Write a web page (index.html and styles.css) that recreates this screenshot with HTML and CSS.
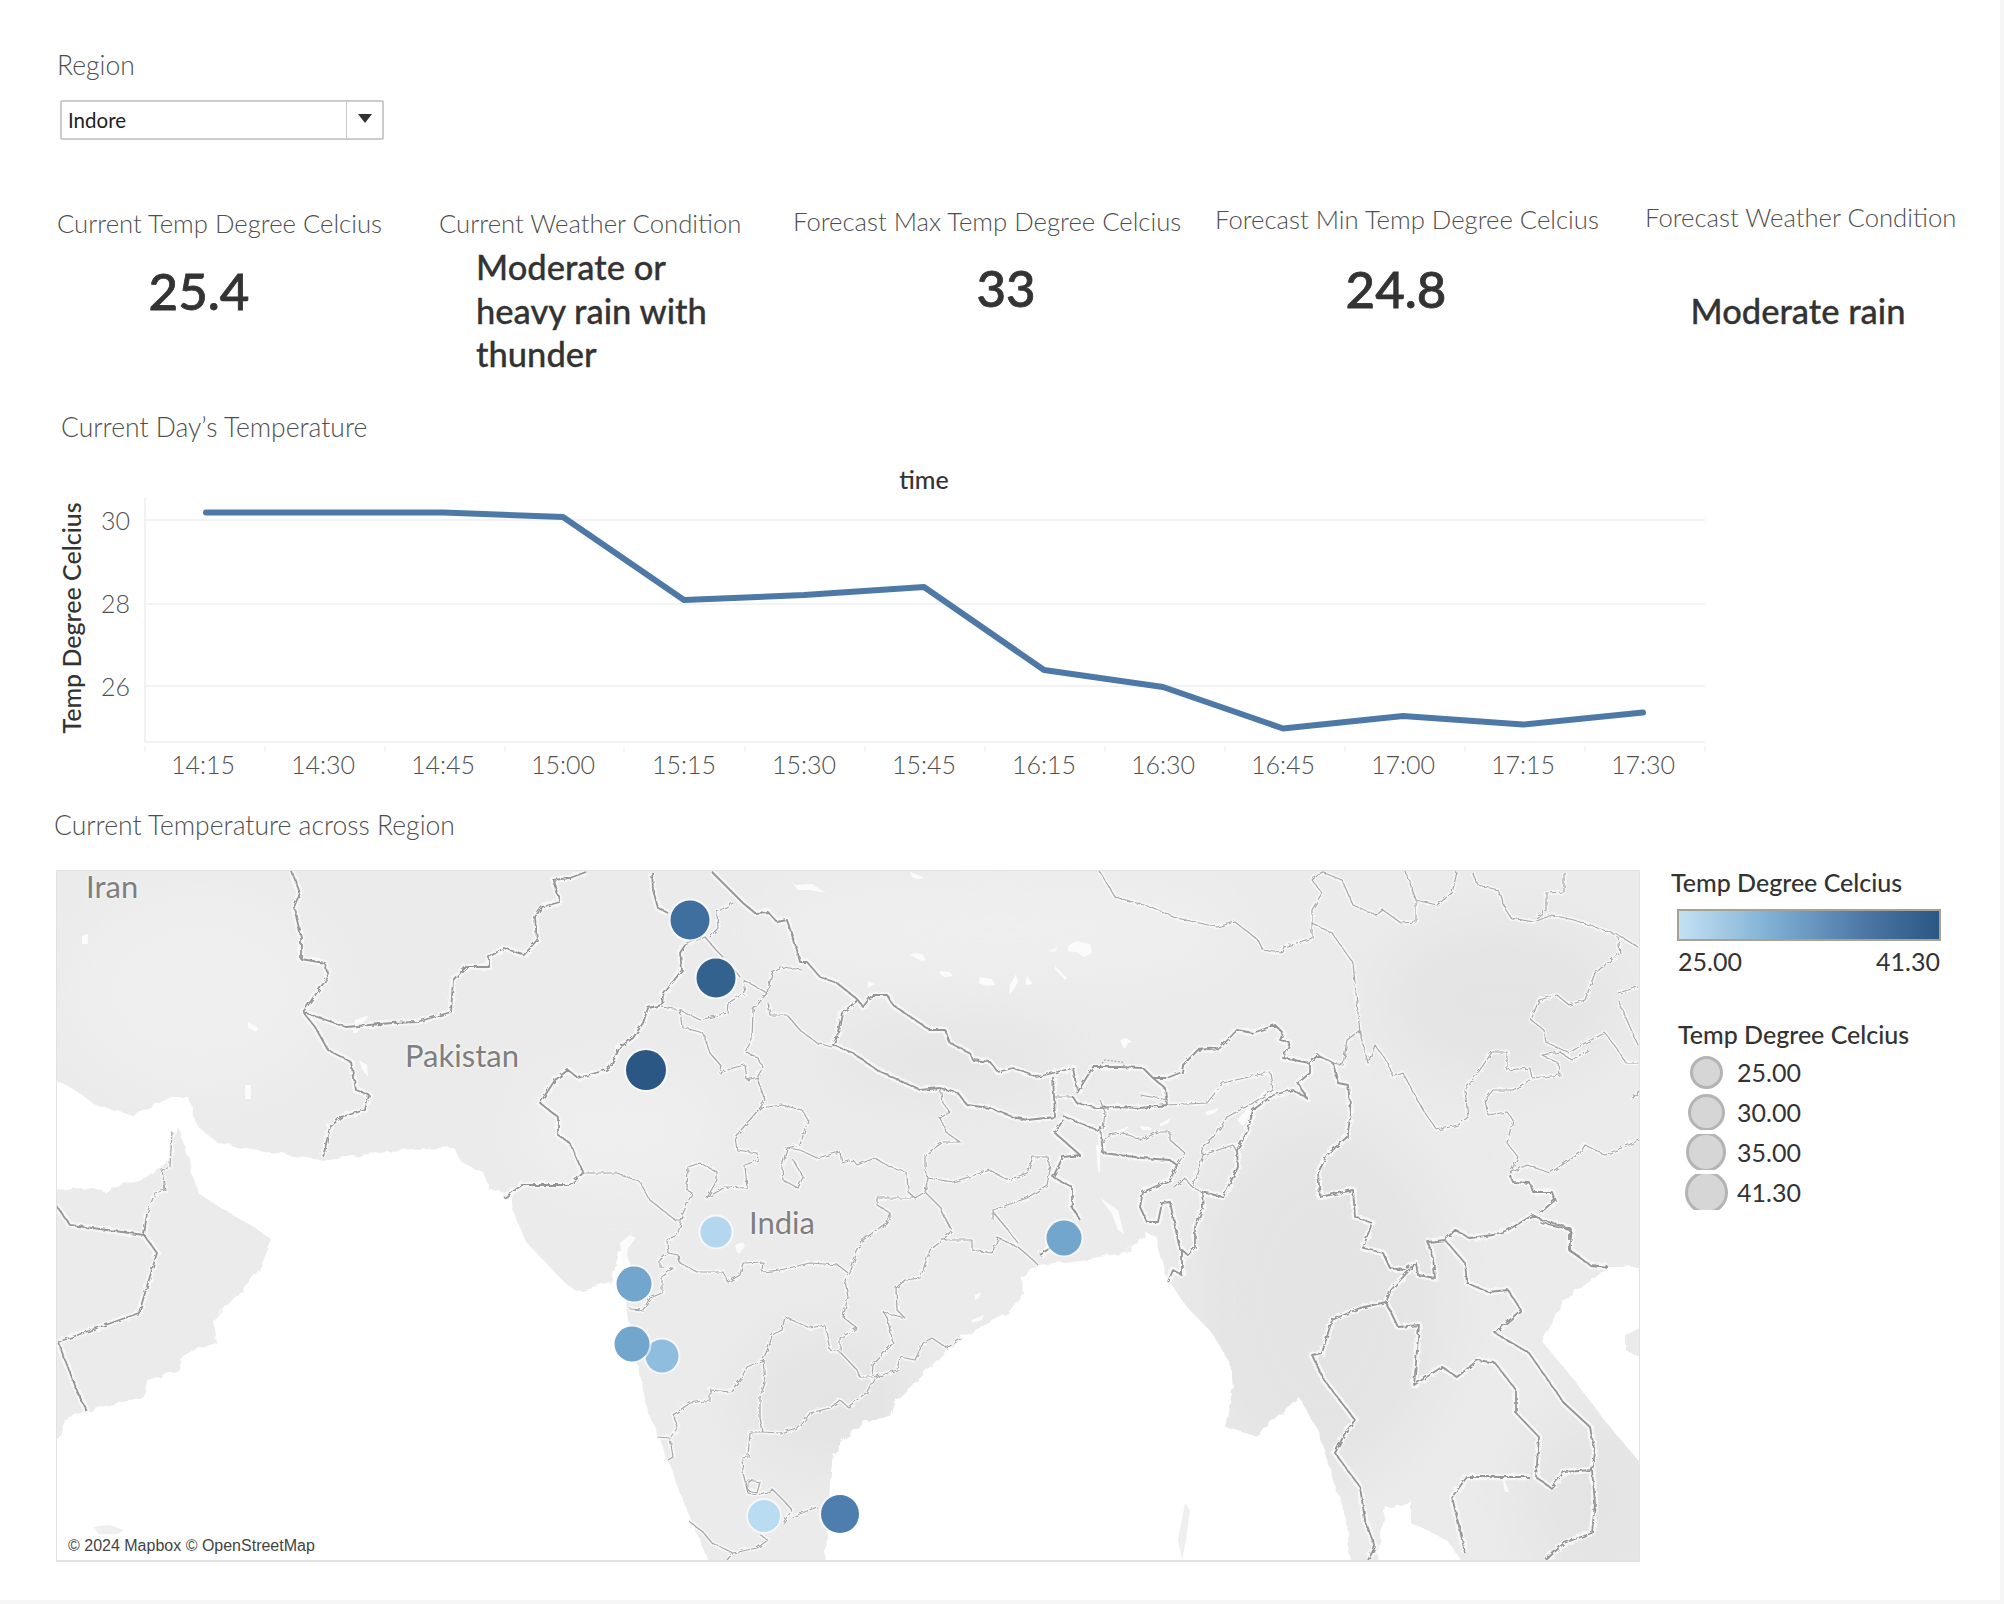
FILE: index.html
```html
<!DOCTYPE html>
<html lang="en">
<head>
    <meta charset="UTF-8">
    <title>Weather Dashboard</title>
    <link rel="stylesheet" href="styles.css">
</head>
<body>
    <div class="dashboard">
        <div class="filter">
            <div class="title">Region</div>
            <div class="select">
                <span class="select-value">Indore</span>
                <span class="select-button"><span class="select-arrow"></span></span>
            </div>
        </div>

        <div class="kpis">
            <div class="kpi kpi-temp">
                <div class="title">Current Temp Degree Celcius</div>
                <div class="kpi-number">25.4</div>
            </div>
            <div class="kpi kpi-cond">
                <div class="title">Current Weather Condition</div>
                <div class="kpi-text">Moderate or heavy rain with thunder</div>
            </div>
            <div class="kpi kpi-max">
                <div class="title">Forecast Max Temp Degree Celcius</div>
                <div class="kpi-number">33</div>
            </div>
            <div class="kpi kpi-min">
                <div class="title">Forecast Min Temp Degree Celcius</div>
                <div class="kpi-number">24.8</div>
            </div>
            <div class="kpi kpi-forecast">
                <div class="title">Forecast Weather Condition</div>
                <div class="kpi-text">Moderate rain</div>
            </div>
        </div>

        <div class="title chart-title">Current Day’s Temperature</div>
        <svg class="chart" viewBox="50 442 1680 369">
            <path class="axis" d="M145 498V742H1705"/>
            <path class="grid" d="M145 520H1705M145 604H1705M145 686H1705"/>
            <path class="tick" d="M145 746V752M265 746V752M385 746V752M505 746V752M624 746V752M745 746V752M865 746V752M985 746V752M1105 746V752M1225 746V752M1345 746V752M1465 746V752M1585 746V752M1705 746V752"/>
            <polyline class="temp-line" points="206,512.5 323,512.5 443,512.5 563,517 684,600 804,595 924,587 1044,670 1163,687 1283,728.5 1403,716 1523,724.5 1643,712.5"/>
            <text class="axis-name" x="924" y="489" text-anchor="middle">time</text>
            <text class="axis-name" transform="translate(81 618) rotate(-90)" text-anchor="middle">Temp Degree Celcius</text>
            <text class="axis-label" x="130" y="530" text-anchor="end">30</text>
            <text class="axis-label" x="130" y="613" text-anchor="end">28</text>
            <text class="axis-label" x="130" y="696" text-anchor="end">26</text>
            <g class="axis-label" text-anchor="middle">
                <text x="203" y="774">14:15</text>
                <text x="323" y="774">14:30</text>
                <text x="443" y="774">14:45</text>
                <text x="563" y="774">15:00</text>
                <text x="684" y="774">15:15</text>
                <text x="804" y="774">15:30</text>
                <text x="924" y="774">15:45</text>
                <text x="1044" y="774">16:15</text>
                <text x="1163" y="774">16:30</text>
                <text x="1283" y="774">16:45</text>
                <text x="1403" y="774">17:00</text>
                <text x="1523" y="774">17:15</text>
                <text x="1643" y="774">17:30</text>
            </g>
        </svg>

        <div class="title map-title">Current Temperature across Region</div>
        <div class="map-row">
            <div class="map">
                <svg class="map-svg" viewBox="56 870 1584 692">
                    <defs>
                        <filter id="soft" x="-20%" y="-20%" width="140%" height="140%"><feGaussianBlur stdDeviation="30"/></filter>
                        <filter id="edge" x="-2%" y="-2%" width="104%" height="104%">
                            <feTurbulence type="fractalNoise" baseFrequency="0.09" numOctaves="2" seed="4"/>
                            <feDisplacementMap in="SourceGraphic" scale="7"/>
                            <feGaussianBlur stdDeviation="0.7"/>
                        </filter>
                        <filter id="wiggle" x="-2%" y="-2%" width="104%" height="104%">
                            <feTurbulence type="fractalNoise" baseFrequency="0.2" numOctaves="2" seed="7"/>
                            <feDisplacementMap in="SourceGraphic" scale="4"/>
                            <feGaussianBlur stdDeviation="0.4"/>
                        </filter>
                        <path id="states" d="M680 1010L682 1027 703 1033 710 1053 722 1067 720 1073 733 1068 745 1065 747 1080 758 1077
                            M662 1007L680 1010 700 1020 727 1013 728 1003 745 993 743 980 753 985 767 993
                            M740 977L730 965M710 937L718 928 717 912 733 903
                            M685 945L705 937 716 950 724 958
                            M767 993L772 973 783 967 802 970
                            M768 1003L770 1015 787 1015 800 1030 817 1043 832 1047
                            M767 993L753 1010 752 1040 745 1052 757 1057 763 1067 757 1078 765 1100 760 1108 782 1105
                            M782 1105L802 1110 808 1120 800 1145 787 1148 800 1150 817 1158 840 1152 842 1163 853 1160 857 1165 875 1158 887 1165 907 1173 908 1192 915 1198
                            M787 1148L782 1167 783 1180 798 1188 803 1177 793 1160
                            M760 1108L735 1137 737 1150 757 1153 758 1160 745 1165 747 1188 725 1187 707 1198 717 1180 717 1172 700 1163 688 1167 687 1190 692 1193 680 1220 683 1217 677 1235 667 1240 668 1253 660 1260 660 1267 673 1268 662 1277 662 1293 650 1298 643 1310 630 1309
                            M583 1173L600 1173 617 1173 640 1182 650 1200 675 1220 680 1220
                            M668 1253L678 1255 680 1263 697 1272 723 1272 728 1282 740 1275 743 1263 763 1262 762 1272 780 1270 810 1263 838 1265 848 1273
                            M890 1212L890 1220 863 1240 857 1252 850 1273 845 1280 848 1297 843 1317 857 1328 840 1338 840 1350
                            M785 1317L810 1328 825 1325 830 1350 840 1352 857 1370 860 1377 873 1377 880 1375
                            M785 1317L782 1330 772 1335 770 1343 763 1360 765 1383 760 1397 760 1418 763 1432
                            M763 1360L747 1367 740 1380 730 1392 710 1390 710 1400 690 1403 673 1415 678 1427 670 1438 657 1437
                            M670 1438L673 1457 668 1460
                            M763 1432L780 1433 800 1427 810 1413 830 1408 840 1400 848 1407 867 1392 873 1380 882 1375 897 1370 900 1357 915 1360 923 1343 932 1338 947 1348 962 1338
                            M872 1375L873 1365 893 1343 887 1317 883 1312 905 1318 897 1310 896 1288 905 1280 920 1278 930 1250 943 1240 952 1230 942 1212 950 1228
                            M943 1240L972 1240 972 1250 992 1253 998 1238 1018 1247 1033 1260 1038 1265
                            M993 1212L1008 1230 1018 1243
                            M763 1432L750 1432 748 1457 742 1458 743 1473 748 1493 757 1495 773 1490 785 1502 792 1510 783 1523
                            M792 1517L817 1507
                            M690 1522L703 1532 712 1543 733 1553 757 1548 768 1540 760 1535
                            M733 1553L727 1560
                            M748 1480L760 1482 757 1493 748 1490Z
                            M940 1088L943 1103 950 1112 940 1118 947 1133 960 1142 943 1142 925 1155 925 1170 928 1178 953 1182 990 1170 1008 1180 1027 1173 1033 1157 1048 1157 1050 1170 1047 1185 1027 1198 1013 1203 993 1210 993 1220
                            M928 1178L925 1192 915 1198 877 1198 877 1205 890 1213 883 1228
                            M925 1192L940 1207 950 1228
                            M1053 1097L1073 1097
                            M1167 1105L1207 1103 1223 1083 1270 1072 1273 1090 1253 1103 1227 1117 1217 1133 1202 1147 1203 1155 1192 1187 1185 1178 1175 1188
                            M1203 1155L1233 1145 1237 1152
                            M1103 1143L1108 1135 1123 1133 1142 1140 1157 1132 1170 1132 1170 1140 1185 1153 1177 1165
                            M1100 1100L1105 1112 1103 1130
                            M1192 1187L1202 1192
                            M1312 923L1332 933 1353 963 1355 983 1360 1033 1368 1063 1375 1045 1388 1063 1393 1077 1403 1073 1423 1110 1437 1130 1458 1125 1468 1117 1465 1090 1482 1067 1492 1052 1507 1052 1507 1070 1530 1068 1532 1078 1560 1075 1558 1063 1542 1055 1560 1052 1572 1060 1588 1050
                            M1360 1030L1347 1040 1343 1065 1333 1063
                            M1100 872L1115 897 1151 907 1177 918 1217 927 1235 922 1258 940 1263 950 1281 953 1284 947 1312 938 1312 925 1312 910 1322 893 1312 880 1322 872
                            M1530 1080L1513 1090 1493 1090 1485 1100 1488 1115 1507 1112 1513 1120 1507 1143 1518 1157 1510 1173 1527 1165 1550 1173 1580 1153 1585 1145 1605 1155 1640 1140
                            M1406 872L1416 900 1437 905 1452 893 1457 872
                            M1416 900L1416 922 1401 923 1383 910 1376 915 1353 905 1342 880 1322 872
                            M1472 872L1478 885 1498 890 1506 910 1511 918 1534 922 1552 915 1574 920 1618 935 1638 947
                            M1564 872L1564 892 1546 893 1546 910 1536 918
                            M1618 937L1620 953 1595 973 1585 1000 1569 1005 1557 995 1539 1000 1531 1020 1544 1030 1546 1042 1569 1053 1585 1043 1605 1033 1618 1050 1626 1063 1638 1063
                            M1618 993L1638 987M1618 1000L1630 1027 1638 1045M1631 1100L1640 1090
                            M147 1213L155 1193 165 1190 162 1170 170 1167 172 1132
                            M1168 1100L1140 1095"/>
                        <path id="countries" d="M652 872L653 890 658 908 668 913M685 945L680 953 682 970 672 983 663 995 662 1005 648 1008 643 1023 633 1038 620 1047 610 1067 606 1070 578 1078 568 1070 555 1080 540 1103 558 1117 558 1135 570 1143 583 1173 570 1185 522 1185 504 1198
                            M292 872L300 893 294 907 301 937 301 959 325 963 328 977 303 1012 346 1027 392 1023 417 1022 451 1012 453 980 466 967 489 967 489 957 504 948 524 955 537 940 535 917 542 907 560 902 553 880 570 878 586 872
                            M303 1012L315 1027 328 1050 351 1062 356 1090 369 1095 365 1110 341 1117 330 1127 323 1157
                            M712 872L727 887 743 903 755 913 768 912 777 922 787 920 797 950 800 962 807 962 820 977 837 983 858 1000 863 1007 872 995 887 995 893 1005 930 1030 945 1030 950 1043 970 1053 973 1060 990 1062 998 1072 1013 1068 1037 1077 1057 1072 1073 1068 1077 1090
                            M858 1000L842 1013 837 1037 833 1045 853 1053 877 1070 903 1082 920 1090 940 1088 958 1093 967 1105 990 1108 1013 1117 1027 1120 1055 1117 1053 1077
                            M1077 1093L1093 1067 1120 1067 1143 1068 1153 1078 1165 1088 1167 1105 1140 1108 1118 1107 1097 1108 1077 1103 1073 1097
                            M1153 1078L1167 1078 1182 1072 1183 1065 1198 1050 1220 1048 1237 1030 1253 1033 1275 1025 1283 1033 1280 1040 1290 1043 1283 1058 1310 1063 1318 1055 1333 1063 1338 1083 1348 1085 1351 1113 1347 1137 1327 1155 1318 1173 1320 1197 1353 1190 1355 1217 1372 1223 1363 1248 1383 1253 1390 1268 1403 1270 1416 1263 1418 1275 1435 1278 1433 1257 1428 1242 1445 1240 1455 1230 1470 1238 1493 1235 1508 1230 1533 1215 1542 1220 1570 1228 1570 1250 1580 1257
                            M1310 1063L1310 1073 1298 1083 1307 1098 1293 1090 1273 1095 1253 1110 1248 1130 1237 1150 1238 1167 1223 1197 1202 1192 1203 1208 1195 1227 1195 1247 1188 1255 1182 1250 1182 1275 1173 1270 1168 1282
                            M1062 1115L1080 1123 1097 1130 1100 1127 1103 1153 1143 1158 1170 1160 1177 1165 1170 1180 1143 1192 1140 1207 1147 1222 1158 1222 1162 1203 1170 1202 1180 1250
                            M1063 1120L1055 1133 1080 1155 1063 1157 1053 1177 1072 1187 1072 1207 1080 1220
                            M1040 1255L1050 1248
                            M1416 1263L1391 1290 1386 1302 1360 1308 1332 1320 1322 1353 1312 1355 1324 1380 1345 1407 1355 1420 1345 1433 1335 1453 1360 1487 1365 1520 1375 1547 1368 1560
                            M1386 1302L1398 1327 1419 1325 1416 1363 1414 1385 1442 1367 1457 1377 1478 1360 1495 1363 1516 1390 1516 1413 1539 1437 1536 1477 1551 1488 1564 1472 1592 1470
                            M1529 1477L1467 1477 1452 1497 1460 1530 1465 1553
                            M1445 1240L1465 1263 1467 1283 1488 1292 1508 1290 1521 1310 1495 1333 1529 1353 1564 1403 1590 1427 1595 1453 1592 1470 1595 1503 1592 1533 1564 1543 1546 1560
                            M1539 1222L1572 1230 1569 1250 1590 1265 1608 1267
                            M1510 1175L1513 1182 1530 1183 1533 1192 1552 1192 1555 1200 1540 1213
                            M56 1205L70 1225 144 1235 157 1253 139 1313 58 1342 78 1393 87 1412
                            M144 1235L147 1213"/>
                    </defs>

                    <rect class="land" x="56" y="870" width="1584" height="692"/>
                    <g class="relief" filter="url(#soft)">
                        <ellipse class="shade" cx="1320" cy="1300" rx="130" ry="180"/>
                        <ellipse class="shade" cx="950" cy="1060" rx="120" ry="32"/>
                        <ellipse class="shade" cx="1500" cy="1000" rx="120" ry="80"/>
                        <ellipse class="shade" cx="1600" cy="1500" rx="80" ry="90"/>
                        <ellipse class="shade" cx="830" cy="1400" rx="90" ry="70"/>
                        <ellipse class="glow" cx="200" cy="990" rx="130" ry="100"/>
                        <ellipse class="glow" cx="620" cy="1130" rx="100" ry="60"/>
                        <ellipse class="glow" cx="1000" cy="930" rx="240" ry="50"/>
                    </g>
                    <g class="sea" filter="url(#edge)">
                        <path d="M50 1077L70 1087 96 1105 132 1115 172 1097 188 1097 198 1127 218 1143 269 1152 320 1160 377 1153 453 1147 463 1163 484 1173 489 1190 514 1193 512 1210 527 1243 565 1283 578 1292 611 1283 619 1253 626 1247 629 1263 620 1283 626 1303 629 1320 634 1353 647 1407 667 1460 688 1513 713 1570 50 1570 50 1440 58 1440 65 1420 101 1407 144 1397 147 1380 180 1370 185 1353 216 1343 213 1320 239 1293 259 1270 272 1240 254 1227 229 1213 198 1193 186 1150 178 1127 170 1160 142 1180 106 1190 76 1188 50 1193Z"/>
                        <path d="M825 1570L830 1483 833 1453 850 1433 860 1427 865 1420 891 1417 896 1400 932 1367 962 1337 1008 1313 1023 1293 1021 1277 1039 1265 1080 1260 1125 1253 1146 1233 1156 1237 1166 1277 1187 1307 1212 1333 1230 1363 1233 1387 1225 1427 1258 1437 1273 1420 1299 1397 1319 1433 1335 1487 1347 1520 1350 1570Z"/>
                        <path d="M1375 1570L1386 1507 1411 1502 1411 1523 1447 1540 1467 1570Z"/>
                        <path d="M1646 1267L1608 1267 1585 1283 1564 1300 1541 1340 1574 1380 1610 1427 1638 1460 1646 1460 1646 1360 1625 1350 1625 1335 1646 1325Z"/>
                    </g>
                    <g class="islands">
                        <path d="M93 1527L110 1525 124 1530 115 1536 100 1535Z"/>
                        <path d="M1185 1503L1190 1510 1186 1540 1182 1560 1178 1540Z"/>
                    </g>
                    <g class="lakes">
                        <path d="M788 877L798 890 810 890 826 893 812 884 795 885Z"/>
                        <path d="M910 872l8 3 6 3-7 1-5-2z"/>
                        <path d="M910 955l12 6 4-1-4-6-8-1z"/>
                        <path d="M1068 946l8-5 14 3 2 9-8 4-8-5-8-1z"/>
                        <path d="M1048 951l8-3 2-1-3 5z"/>
                        <path d="M940 971l10 1 3 4-9 1-4-3z"/>
                        <path d="M980 977l12 2 3 6-9 1-7-3z"/>
                        <path d="M1010 985l6-11 2 8-6 10-3 2z"/>
                        <path d="M1027 976l6 8-8 1z"/>
                        <path d="M1055 966l12 12-2 2-10-11z"/>
                        <path d="M868 981l7 3-7 4z"/>
                        <path d="M1237 1120l28-30 4 2-20 24-6 10z"/>
                        <path d="M1205 1112l14-4-4 5-8 2z"/>
                        <path d="M1115 1132l14-6-2 3-10 5z"/>
                        <path d="M1140 1126l10 1 2 3-10 0z"/>
                        <path d="M1160 1124l12-7-4 6-8 4z"/>
                        <path d="M1096 1145l4 0 0 28-2-2z"/>
                        <path d="M1100 1198l18 12 6 24-6-4-6-16z"/>
                        <path d="M620 1243l10-8 6 3-8 10-2 20-4-4z"/>
                        <path d="M735 1245l8-3 2 4-6 8-2-2z"/>
                        <path d="M975 1295l6-3-2 6-4 2z"/>
                        <path d="M972 1320l12-5-2 5-10 3z"/>
                        <path d="M1120 1040l6-2 6 4-4 1-3 6-2-2z"/>
                        <path d="M82 936l6-2 0 10-6 0z"/>
                        <path d="M248 1022l10 6-2 4-8-4z"/>
                        <path d="M355 1020l14-5-12 18-4 0z"/>
                        <path d="M245 1085l6 0 0 14-6 0z"/>
                        <path d="M359 1060l8 5 1 12-6-8z"/>
                        <path d="M1503 1476l6 16-4 0-2-10z"/>
                    </g>
                    <use class="halo" href="#states" filter="url(#wiggle)"/>
                    <use class="halo halo-wide" href="#countries" filter="url(#wiggle)"/>
                    <use class="border-state" href="#states" filter="url(#wiggle)"/>
                    <use class="border-country" href="#countries" filter="url(#wiggle)"/>
                    <path class="border-dotted" d="M1100 1066L1105 1060 1122 1062 1125 1067"/>
                    <g class="pins">
                        <circle cx="690" cy="920" r="19.5" fill="#3f6f9f"/>
                        <circle cx="716" cy="978" r="19.5" fill="#34628f"/>
                        <circle cx="646" cy="1070" r="20" fill="#2a5783"/>
                        <circle cx="716" cy="1232" r="15.5" fill="#b3d7ef"/>
                        <circle cx="1064" cy="1238" r="17.5" fill="#73a6cd"/>
                        <circle cx="634" cy="1284" r="17.5" fill="#73a6cd"/>
                        <circle cx="662" cy="1356" r="16.5" fill="#8fbddf"/>
                        <circle cx="632" cy="1344" r="17.5" fill="#73a6cd"/>
                        <circle cx="764" cy="1516" r="16" fill="#b9dcf2"/>
                        <circle cx="840" cy="1514" r="19" fill="#4d7eae"/>
                    </g>
                </svg>
                <div class="place place-iran">Iran</div>
                <div class="place place-pakistan">Pakistan</div>
                <div class="place place-india">India</div>
                <div class="credit">© 2024 Mapbox © OpenStreetMap</div>
            </div>

            <div class="legend">
                <div class="legend-title">Temp Degree Celcius</div>
                <div class="ramp"></div>
                <div class="ramp-labels"><span>25.00</span><span>41.30</span></div>
                <div class="legend-title legend-title-size">Temp Degree Celcius</div>
                <div class="size-row"><span class="size-cell"><i class="dot dot-1"></i></span><span>25.00</span></div>
                <div class="size-row"><span class="size-cell"><i class="dot dot-2"></i></span><span>30.00</span></div>
                <div class="size-row"><span class="size-cell"><i class="dot dot-3"></i></span><span>35.00</span></div>
                <div class="size-row"><span class="size-cell"><i class="dot dot-4"></i></span><span>41.30</span></div>
            </div>
        </div>
    </div>
</body>
</html>
```

FILE: styles.css
```css
body {
    margin: 0;
    background-color: #f6f6f6;
    font-family: Lato, "Open Sans", sans-serif;
}

.dashboard {
    width: 2000px;
    height: 1600px;
    background-color: #ffffff;
    overflow: hidden;
}

.title {
    font-size: 26.5px;
    line-height: 28px;
    font-weight: 300;
    color: #4f4f4f;
    white-space: nowrap;
}

.kpi .title {
    font-size: 25.7px;
}

/* region filter */
.filter {
    height: 89px;
    padding: 51px 0 0 57px;
}

.select {
    display: flex;
    width: 320px;
    height: 36px;
    margin: 21px 0 0 3px;
    border: 2px solid #cccccc;
    border-radius: 2px;
    align-items: center;
}

.select-value {
    flex: 1;
    padding-left: 6px;
    font-size: 20.5px;
    color: #222;
}

.select-button {
    display: flex;
    width: 35px;
    height: 100%;
    border-left: 1px solid #cccccc;
    align-items: center;
    justify-content: center;
}

.select-arrow {
    border-left: 7px solid transparent;
    border-right: 7px solid transparent;
    border-top: 9px solid #333;
    margin-bottom: 3px;
}

/* number cards */
.kpis {
    display: flex;
    height: 273px;
    padding-left: 57px;
}

.kpi-number {
    font-size: 51px;
    line-height: 60px;
    font-weight: 500;
    color: #333;
    text-align: center;
    -webkit-text-stroke: 0.8px #333;
}

.kpi-text {
    font-size: 34.5px;
    line-height: 43.5px;
    font-weight: 500;
    color: #333;
    -webkit-text-stroke: 0.3px #333;
}

.kpi-temp { width: 382px; padding-top: 69px; }
.kpi-temp .kpi-number { width: 284px; margin-top: 24px; }
.kpi-cond { width: 354px; padding-top: 69px; }
.kpi-cond .kpi-text { width: 262px; margin: 8px 0 0 37px; }
.kpi-max { width: 422px; padding-top: 67px; }
.kpi-max .kpi-number { width: 426px; margin-top: 23px; }
.kpi-min { width: 430px; padding-top: 65px; }
.kpi-min .kpi-number { width: 362px; margin-top: 26px; }
.kpi-forecast { padding-top: 63px; }
.kpi-forecast .kpi-text { width: 306px; margin-top: 58px; text-align: center; }

/* line chart */
.chart-title {
    margin-left: 61px;
}

.chart {
    display: block;
    width: 1680px;
    height: 369px;
    margin: 1px 0 0 50px;
}

.axis {
    fill: none;
    stroke: #eeeeee;
    stroke-width: 1.5;
}

.grid {
    fill: none;
    stroke: #f0f0f0;
    stroke-width: 1.5;
}

.tick {
    fill: none;
    stroke: #eeeeee;
    stroke-width: 1;
}

.temp-line {
    fill: none;
    stroke: #4e79a7;
    stroke-width: 6;
    stroke-linejoin: round;
    stroke-linecap: round;
}

.axis-name {
    font-size: 25px;
    font-weight: 500;
    fill: #333;
}

.axis-label {
    font-size: 25px;
    font-weight: 300;
    fill: #4f4f4f;
}

/* map */
.map-title {
    margin-left: 54px;
}

.map-row {
    display: flex;
    margin: 31px 0 0 56px;
}

.map {
    position: relative;
    width: 1584px;
    height: 692px;
    flex-shrink: 0;
}

.map-svg {
    display: block;
    width: 1584px;
    height: 692px;
}

.land { fill: #ebebeb; }
.shade { fill: #e4e4e4; }
.glow { fill: #efefef; }
.sea path { fill: #ffffff; }
.islands path { fill: #efefef; }
.lakes path { fill: #fbfbfb; }

.halo {
    fill: none;
    stroke: #f7f7f7;
    stroke-width: 4.5;
    stroke-linejoin: round;
}

.halo-wide {
    stroke-width: 6.5;
}

.border-state {
    fill: none;
    stroke: #a6a6a6;
    stroke-width: 1.2;
    stroke-linejoin: round;
}

.border-country {
    fill: none;
    stroke: #959595;
    stroke-width: 1.8;
    stroke-linejoin: round;
}

.border-dotted {
    fill: none;
    stroke: #9a9a9a;
    stroke-width: 1.2;
    stroke-dasharray: 1.5 2;
}

.place {
    position: absolute;
    font-size: 31px;
    line-height: 34px;
    color: #7f7f7f;
    text-shadow: 0 0 3px #f8f8f8, 0 0 3px #f8f8f8;
}

.place-iran { left: 30px; top: -1px; }
.place-pakistan { left: 349px; top: 168px; }
.place-india { left: 693px; top: 335px; }

.pins circle {
    stroke: rgba(255, 255, 255, 0.6);
    stroke-width: 4;
    paint-order: stroke;
}

.map::after {
    content: "";
    position: absolute;
    top: 0;
    left: 0;
    right: 0;
    bottom: 0;
    border: 1px solid #e2e2e2;
    border-bottom-width: 2px;
    pointer-events: none;
}

.credit {
    position: absolute;
    left: 6px;
    bottom: 4px;
    padding: 2px 6px;
    background-color: rgba(255, 255, 255, 0.7);
    font-family: "Liberation Sans", Arial, sans-serif;
    font-size: 16px;
    line-height: 20px;
    color: #444;
}

/* legends */
.legend {
    margin-top: -2px;
    padding-left: 31px;
    color: #333;
    font-size: 25px;
}

.legend-title {
    font-size: 25px;
    line-height: 28px;
    font-weight: 500;
    white-space: nowrap;
}

.legend-title-size {
    margin: 45px 0 6px 7px;
}

.ramp {
    width: 260px;
    height: 28px;
    margin: 13px 0 0 6px;
    border: 2px solid #a8a294;
    background: linear-gradient(to right, #c4e1f3, #7fb0d4 35%, #4e79a7 70%, #2a5783);
}

.ramp-labels {
    display: flex;
    justify-content: space-between;
    width: 262px;
    margin: 6px 0 0 7px;
    line-height: 28px;
}

.size-row {
    display: flex;
    height: 36px;
    margin-top: 4px;
    margin-left: 8px;
    align-items: center;
}

.size-cell {
    display: flex;
    width: 54px;
    height: 36px;
    margin-right: 4px;
    overflow: hidden;
    align-items: center;
    justify-content: center;
    flex-shrink: 0;
}

.dot {
    flex-shrink: 0;
    box-sizing: border-box;
    border: 3px solid #b4b4b4;
    border-radius: 50%;
    background-color: #d6d6d6;
}

.dot-1 { width: 33px; height: 33px; }
.dot-2 { width: 37px; height: 37px; }
.dot-3 { width: 40px; height: 40px; }
.dot-4 { width: 43px; height: 43px; }
```
